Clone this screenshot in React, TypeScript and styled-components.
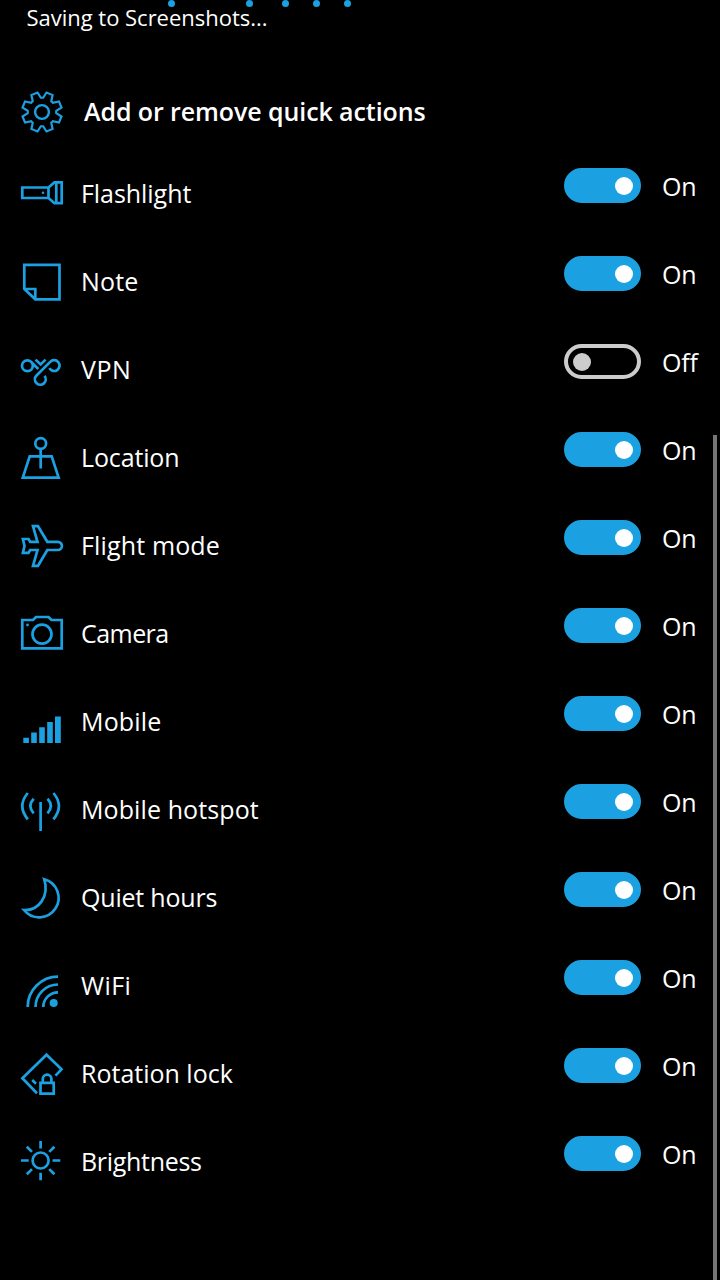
import React from 'react';
import styled, { createGlobalStyle } from 'styled-components';

const ACCENT = '#1ba1e2';

const GlobalStyle = createGlobalStyle`
  body { margin: 0; background: #000; }
`;

const Screen = styled.main`
  position: relative;
  box-sizing: border-box;
  width: 720px;
  height: 1280px;
  overflow: hidden;
  background: #000;
  color: #fff;
  font-family: 'Open Sans', 'Noto Sans', sans-serif;
  white-space: nowrap;
`;

const StatusBar = styled.header`
  height: 80px;
  padding-left: 26.5px;
`;

const StatusText = styled.div`
  font-size: 22px;
  line-height: 35px;
  letter-spacing: -0.02px;
`;

const ProgressDot = styled.i<{ $x: number }>`
  position: absolute;
  top: 0;
  left: ${p => p.$x}px;
  width: 7px;
  height: 7px;
  border-radius: 50%;
  background: ${ACCENT};
`;

const Heading = styled.div`
  display: flex;
  height: 70px;
  padding-left: 10px;
`;

const Title = styled.h1`
  margin: 0 0 0 14px;
  font-size: 25px;
  font-weight: 600;
  line-height: 62px;
  letter-spacing: -0.09px;
`;

const List = styled.ul`
  margin: 0;
  padding: 0;
  list-style: none;
`;

const Row = styled.li`
  display: grid;
  grid-template-columns: 60px 483px 98px 48px;
  align-items: start;
  height: 88px;
  padding-left: 10px;
`;

const Icon = styled.svg`
  display: block;
  width: 60px;
  height: 60px;
  fill: none;
  stroke: ${ACCENT};
  stroke-width: 2.7;
`;

const RowIcon = styled(Icon)`
  margin-top: 15px;
`;

const Label = styled.span<{ $tracking: number }>`
  padding-left: 11px;
  font-size: 25px;
  line-height: 86px;
  letter-spacing: ${p => p.$tracking}px;
`;

const Switch = styled.button<{ $on: boolean }>`
  display: flex;
  align-items: center;
  justify-content: ${p => (p.$on ? 'flex-end' : 'flex-start')};
  box-sizing: border-box;
  width: 77px;
  height: 35px;
  margin: 18px 0 0 11px;
  padding: 0 ${p => (p.$on ? 4 : 5)}px;
  border: 4px solid ${p => (p.$on ? ACCENT : '#ccc')};
  border-radius: 18px;
  background: ${p => (p.$on ? ACCENT : '#000')};
`;

const Knob = styled.span<{ $on: boolean }>`
  width: 18px;
  height: 18px;
  border-radius: 50%;
  background: ${p => (p.$on ? '#fff' : '#ccc')};
`;

const State = styled.span`
  padding-left: 11px;
  font-size: 25px;
  line-height: 72px;
  letter-spacing: -0.2px;
`;

const Scrollbar = styled.div`
  position: absolute;
  top: 435px;
  right: 3px;
  bottom: 0;
  width: 4px;
  background: #767676;
`;

const gearPoints = Array.from({ length: 8 }, (_, i) => {
  const corners: [number, number][] = [[-4.5, 14.3], [4.5, 14.3], [13, 20], [32, 20]];
  return corners.map(([a, r]) => {
    const t = ((a + i * 45) * Math.PI) / 180;
    return `${(32 + r * Math.sin(t)).toFixed(2)},${(32 - r * Math.cos(t)).toFixed(2)}`;
  }).join(' ');
}).join(' ');

const icons: Record<string, React.ReactNode> = {
  flashlight: <>
    <path d="M38.5 22.5H12.3V33H38.5ZM38.5 22.5L44.5 17.3H51.7V38.2H44.5L38.5 33M46.3 17V38" />
    <circle cx="33" cy="27.7" r="1.3" fill={ACCENT} stroke="none" />
  </>,
  note: <path d="M14.3 11.8H49.5V46.3H25.3L14.3 36ZM14.3 36H25.3V46.3" />,
  vpn: <>
    <path d="M39.4 27.2A5.4 5.4 0 1 0 40.2 20.9L26.5 34.5A5.4 5.4 0 1 0 34.5 34.9" />
    <path d="M22.8 24.7A5.4 5.4 0 1 0 17.4 30.1C20.6 30.1 22.8 27.5 22.8 24.7M21.4 21.2L28.3 28M25.6 18.6L30.6 23.4L35.6 18.6" />
  </>,
  location: <>
    <circle cx="30.7" cy="14.5" r="5.4" />
    <path d="M30.7 20V39.5M19.7 27.4H41.7L48.6 48.7H12.8Z" />
  </>,
  flight: <path d="M23 9.2H28L37.3 24.8H47.8A4.1 4.1 0 0 1 47.8 33H37.3L28 48.8H23L27.5 33H20.2L18.5 35.8H12.9L14.5 28.9L12.9 22H18.5L20.2 24.8H27.5Z" />,
  camera: <>
    <path d="M12.3 15H23L26 12H38.5L41.5 15H51.7V43.4H12.3Z" />
    <circle cx="32" cy="29.2" r="9.5" />
    <circle cx="17.5" cy="19.9" r="1.4" fill={ACCENT} stroke="none" />
  </>,
  mobile: <path d="M13.3 44.7h5.6v5.3h-5.6zM21.2 39.6h5.6v10.4h-5.6zM29.2 34.2h5.6v15.8h-5.6zM37.2 29h5.6v21h-5.6zM45 23.4h5.8v26.6H45z" fill={ACCENT} stroke="none" />,
  hotspot: <path d="M30.6 21V50M23.7 17.7Q17 24.8 23.7 32.3M37.5 17.7Q44.2 24.8 37.5 32.3M17.8 12Q6.8 25 17.8 38.3M43.4 12Q54.4 25 43.4 38.3" />,
  moon: <path d="M34.2 10.2A19.4 19.4 0 1 1 14 41C28 42 39.8 28 34.2 10.2Z" />,
  wifi: <>
    <path d="M17.7 50A30.3 30.3 0 0 1 48 19.7M25.5 50A22.5 22.5 0 0 1 48 27.5M33.3 50A14.7 14.7 0 0 1 48 35.3" />
    <circle cx="43.7" cy="46" r="4" fill={ACCENT} stroke="none" />
  </>,
  rotation: <>
    <path d="M45.5 30.7L51.5 24.3L36.5 9.7L12.4 33.3L27 48.3M22.2 35L26 38.8" />
    <path d="M30.5 37.8H43.7V48.7H30.5ZM32.8 37.8V34A4.3 4.3 0 0 1 41.4 34V37.8" />
  </>,
  brightness: <>
    <circle cx="30.6" cy="27.5" r="8" />
    <path d="M30.6 8V15.5M30.6 39.7V47.2M11 27.5H18.7M42.5 27.5H50.3M16.8 13.7L22 18.9M44.4 13.7L39.2 18.9M16.8 41.3L22 36.1M44.4 41.3L39.2 36.1" />
  </>,
};

const actions = [
  { label: 'Flashlight', icon: 'flashlight', on: true, tracking: -0.05 },
  { label: 'Note', icon: 'note', on: true, tracking: 0.15 },
  { label: 'VPN', icon: 'vpn', on: false, tracking: 0.5 },
  { label: 'Location', icon: 'location', on: true, tracking: -0.14 },
  { label: 'Flight mode', icon: 'flight', on: true, tracking: 0.15 },
  { label: 'Camera', icon: 'camera', on: true, tracking: -0.55 },
  { label: 'Mobile', icon: 'mobile', on: true, tracking: 0.15 },
  { label: 'Mobile hotspot', icon: 'hotspot', on: true, tracking: 0.1 },
  { label: 'Quiet hours', icon: 'moon', on: true, tracking: -0.2 },
  { label: 'WiFi', icon: 'wifi', on: true, tracking: 0.4 },
  { label: 'Rotation lock', icon: 'rotation', on: true, tracking: 0 },
  { label: 'Brightness', icon: 'brightness', on: true, tracking: -0.3 },
];

export default function App() {
  return (
    <Screen>
      <GlobalStyle />
      <StatusBar>
        {[168, 246, 282, 313, 344].map(x => <ProgressDot key={x} $x={x} />)}
        <StatusText>Saving to Screenshots...</StatusText>
      </StatusBar>
      <Heading>
        <Icon viewBox="0 0 60 60">
          <polygon points={gearPoints} strokeWidth="2.2" />
          <circle cx="32" cy="32" r="6.9" strokeWidth="2.4" />
        </Icon>
        <Title>Add or remove quick actions</Title>
      </Heading>
      <List>
        {actions.map(a => (
          <Row key={a.label}>
            <RowIcon viewBox="0 0 60 60">{icons[a.icon]}</RowIcon>
            <Label $tracking={a.tracking}>{a.label}</Label>
            <Switch $on={a.on} role="switch" aria-checked={a.on} aria-label={a.label}><Knob $on={a.on} /></Switch>
            <State>{a.on ? 'On' : 'Off'}</State>
          </Row>
        ))}
      </List>
      <Scrollbar />
    </Screen>
  );
}
